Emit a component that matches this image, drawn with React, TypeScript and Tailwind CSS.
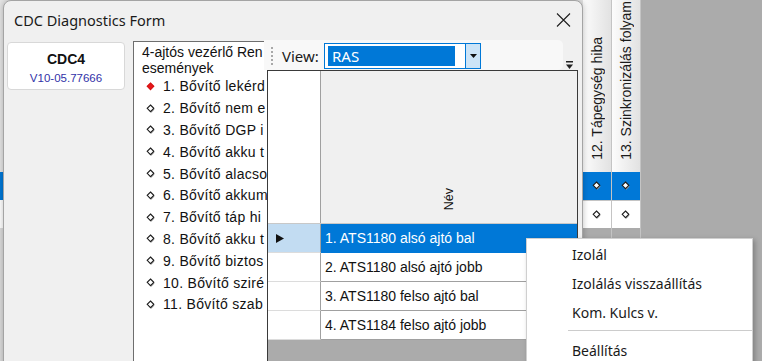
import React from "react";

function Diamond({ red = false }: { red?: boolean }) {
  return (
    <svg width="10" height="10" viewBox="0 0 10 10" className="shrink-0">
      {!red && <path d="M5.3 2.3 L8.5 5.5 L5.3 8.7 L2.1 5.5 Z" fill="#9c9c9c" />}
      <path
        d="M4.5 1 L7.8 4.3 L4.5 7.6 L1.2 4.3 Z"
        fill={red ? "#e8161b" : "#ffffff"}
        stroke={red ? "#d41010" : "#1e1e1e"}
        strokeWidth="1.1"
      />
    </svg>
  );
}

function BgColumn({ label }: { label: string }) {
  return (
    <div className="w-[29px] flex flex-col border-r border-[#c4c4c4]">
      <div className="h-[172px] flex flex-col justify-end items-center overflow-hidden bg-linear-to-r from-[#fcfcfc] to-[#e2e2e2] pb-[12px]">
        <span className="[writing-mode:vertical-rl] rotate-180 whitespace-nowrap text-[14px] leading-[16px] text-[#1a1a1a] font-['Liberation_Sans',Arial,sans-serif]">
          {label}
        </span>
      </div>
      <div className="h-[28px] bg-[#0078d7] flex items-center justify-center">
        <Diamond />
      </div>
      <div className="h-[28px] bg-white flex items-center justify-center border-t border-[#c4c4c4]">
        <Diamond />
      </div>
    </div>
  );
}

const items = [
  "1. Bővítő lekérd",
  "2. Bővítő nem e",
  "3. Bővítő DGP i",
  "4. Bővítő akku t",
  "5. Bővítő alacso",
  "6. Bővítő akkum",
  "7. Bővítő táp hi",
  "8. Bővítő akku t",
  "9. Bővítő biztos",
  "10. Bővítő sziré",
  "11. Bővítő szab",
];

const rows = [
  "1. ATS1180 alsó ajtó bal",
  "2. ATS1180 alsó ajtó jobb",
  "3. ATS1180 felso ajtó bal",
  "4. ATS1184 felso ajtó jobb",
];

export default function App() {
  return (
    <div className="relative w-[762px] h-[361px] overflow-hidden bg-[#ababab] font-['Liberation_Sans',Arial,sans-serif]">
      {/* background application grid */}
      <div className="flex h-full">
        <div className="w-[583px] flex flex-col">
          <div className="h-[172px] bg-[#e4e4e4]" />
          <div className="h-[28px] bg-[#0078d7]" />
          <div className="h-[28px] bg-white" />
          <div className="flex-1 bg-[#dcdcdc]" />
        </div>
        <BgColumn label="12. Tápegység hiba" />
        <BgColumn label="13. Szinkronizálás folyam" />
      </div>

      {/* dialog */}
      <div className="absolute left-[3px] top-0 w-[580px] h-[400px] bg-[#f0f0f0] border border-[#a4a4a4] rounded-t-[8px] shadow-[0_0_6px_rgba(0,0,0,0.25)]">
        <div className="h-[39px] flex items-center justify-between pl-[10px] pr-[11px]">
          <span className="text-[14.5px] text-[#1a1a1a] font-['Noto_Sans','Open_Sans',sans-serif]">
            CDC Diagnostics Form
          </span>
          <svg width="15" height="14" viewBox="0 0 15 14" className="-mt-[2px]">
            <path d="M1 0.5 L14 13.5 M14 0.5 L1 13.5" stroke="#1f1f1f" strokeWidth="1.1" />
          </svg>
        </div>
        <div className="flex items-start pl-[3px] gap-[8px]">
          <div className="mt-[2px] w-[118px] h-[48px] bg-white border border-[#d8d8d8] rounded-[4px] flex flex-col items-center pt-[8px]">
            <span className="text-[14px] leading-[16px] font-bold text-[#111]">CDC4</span>
            <span className="mt-[4px] text-[11.5px] leading-[14px] text-[#3232a8]">V10-05.77666</span>
          </div>
          <div className="mt-[1px] w-[134px] h-[340px] bg-white border border-r-0 border-[#6e6e6e] pl-[8px] pt-[2px] overflow-hidden">
            <div className="text-[14px] leading-[16px] text-[#111] whitespace-nowrap">4-ajtós vezérlő Ren</div>
            <div className="text-[14px] leading-[16px] text-[#111] whitespace-nowrap">események</div>
            {items.map((t, i) => (
              <div key={t + i} className="h-[21.8px] flex items-center whitespace-nowrap">
                <span className="ml-[4px]">
                  <Diamond red={i === 0} />
                </span>
                <span className="ml-[7px] text-[14px] tracking-[0.3px] text-[#111]">{t}</span>
              </div>
            ))}
          </div>
        </div>
      </div>

      {/* popup with view toolbar and grid */}
      <div className="absolute left-[264px] top-[40px] w-[314px] flex flex-col">
        <div className="h-[30px] flex">
          <div className="w-[299px] h-[30px] bg-[#f8f8f8] rounded-r-[5px] flex items-center pt-[2px] pl-[7px]">
            <div className="flex flex-col gap-[2px]">
              <div className="w-[2px] h-[2px] bg-[#a8a8a8]" />
              <div className="w-[2px] h-[2px] bg-[#a8a8a8]" />
              <div className="w-[2px] h-[2px] bg-[#a8a8a8]" />
              <div className="w-[2px] h-[2px] bg-[#a8a8a8]" />
              <div className="w-[2px] h-[2px] bg-[#a8a8a8]" />
            </div>
            <span className="ml-[9px] w-[42px] text-[15px] text-[#1a1a1a] font-['Noto_Sans','Open_Sans',sans-serif]">
              View:
            </span>
            <div className="w-[157px] h-[26px] border border-[#0078d7] bg-white flex">
              <div className="ml-[3px] self-center w-[127px] h-[20px] bg-[#0078d7] flex items-center pl-[4px]">
                <span className="text-[15px] text-white font-['Noto_Sans','Open_Sans',sans-serif]">RAS</span>
              </div>
              <div className="flex-1" />
              <div className="w-[15px] bg-[#cce4f7] border-l border-[#0078d7] flex items-center justify-center">
                <svg width="7" height="4" viewBox="0 0 7 4">
                  <path d="M0 0 L7 0 L3.5 4 Z" fill="#111" />
                </svg>
              </div>
            </div>
          </div>
          <div className="flex-1 flex items-end justify-start pl-[2px]">
            <svg width="9" height="9" viewBox="0 0 9 9">
              <rect x="1" y="0" width="7" height="1.5" fill="#222" />
              <path d="M1 3.5 L8 3.5 L4.5 8 Z" fill="#222" />
            </svg>
          </div>
        </div>
        <div className="ml-[3px] w-[311px] h-[300px] border border-[#3a3a3a] bg-[#ababab] flex flex-col">
          <div className="h-[153px] flex border-b border-[#c8c8c8]">
            <div className="w-[53px] bg-white border-r border-[#a0a0a0]" />
            <div className="flex-1 bg-[#f0f0f0] flex flex-col justify-end items-center pb-[13px]">
              <span className="[writing-mode:vertical-rl] rotate-180 whitespace-nowrap text-[12.5px] text-[#111]">
                Név
              </span>
            </div>
          </div>
          {rows.map((r, i) => (
            <div key={r} className="h-[29px] flex">
              <div
                className={
                  i === 0
                    ? "w-[53px] bg-[#c2dcf2] border-r border-[#a0a0a0] border-b border-b-[#dcdcdc] flex items-center pl-[8px]"
                    : "w-[53px] bg-white border-r border-[#a0a0a0] border-b border-b-[#dcdcdc] flex items-center pl-[8px]"
                }
              >
                {i === 0 && (
                  <svg width="8" height="9" viewBox="0 0 8 9">
                    <path d="M0 0 L8 4.5 L0 9 Z" fill="#111" />
                  </svg>
                )}
              </div>
              <div
                className={
                  i === 0
                    ? "flex-1 bg-[#0078d7] border-b border-[#0078d7] flex items-center pl-[4px] text-[14px] text-white whitespace-nowrap"
                    : "flex-1 bg-white border-b border-[#a0a0a0] flex items-center pl-[4px] text-[14px] text-[#111] whitespace-nowrap"
                }
              >
                {r}
              </div>
            </div>
          ))}
        </div>
      </div>

      {/* context menu */}
      <div className="absolute left-[526px] top-[238px] w-[227px] h-[140px] bg-white border border-[#cfcfcf] shadow-[2px_2px_5px_rgba(0,0,0,0.25)] font-['Noto_Sans','Open_Sans',sans-serif] text-[14px] text-[#1a1a1a]">
        <div className="h-[29px] flex items-center pl-[45px] pt-[2px]">Izolál</div>
        <div className="h-[29px] flex items-center pl-[45px] pt-[2px]">Izolálás visszaállítás</div>
        <div className="h-[29px] flex items-center pl-[45px] pt-[2px]">Kom. Kulcs v.</div>
        <div className="my-[4px] ml-[41px] h-px bg-[#cccccc]" />
        <div className="h-[29px] flex items-center pl-[45px] pt-[2px]">Beállítás</div>
      </div>
    </div>
  );
}
